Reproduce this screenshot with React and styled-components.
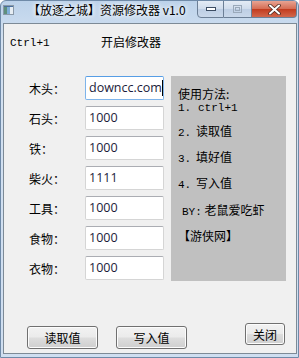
import React from 'react';
import styled, { createGlobalStyle } from 'styled-components';

const Global = createGlobalStyle`
  html, body { margin: 0; padding: 0; background: #fff; }
  #root { width: 299px; height: 358px; }
`;

const cjk = `"Noto Sans CJK SC", "Noto Sans", sans-serif`;

const Win = styled.div`
  width: 299px;
  height: 358px;
  box-sizing: border-box;
  display: flex;
  flex-direction: column;
  background: linear-gradient(#bcd2ea, #d3e1f1 40px, #cfdef0);
  border: 1px solid #6f8aa8;
  border-radius: 6px 6px 0 0;
  overflow: hidden;
`;

const TitleBar = styled.div`
  height: 22px;
  display: flex;
  align-items: flex-start;
  position: relative;
`;

const AppIcon = styled.svg`
  margin: 4px 0 0 2px;
  flex: none;
`;

const Title = styled.div`
  font-family: ${cjk};
  font-size: 12px;
  line-height: 14px;
  color: #000;
  margin: 2px 0 0 14px;
  white-space: nowrap;
  text-shadow: 0 0 6px #fff, 0 0 4px #fff;
`;

const Caption = styled.div`
  display: flex;
  margin-left: auto;
  margin-right: 1px;
  margin-top: -1px;
`;

const CapBtn = styled.div`
  width: ${p => p.$w}px;
  height: 18px;
  box-sizing: border-box;
  border: 1px solid #6c7f96;
  border-left-width: ${p => (p.$first ? 1 : 0)}px;
  border-radius: ${p => p.$r};
  background: ${p => p.$bg};
  display: flex;
  align-items: center;
  justify-content: center;
`;

const Client = styled.div`
  flex: 1;
  margin: 0 1px 3px 2px;
  border: 1px solid #7d8a96;
  background: #f0f0f0;
  display: flex;
  flex-direction: column;
  font-family: ${cjk};
  font-size: 12px;
  color: #000;
`;

const Header = styled.div`
  height: 52px;
  display: flex;
  align-items: flex-start;
  padding-top: 12px;
  box-sizing: border-box;
`;

const Hotkey = styled.span`
  font-family: "Liberation Mono", "DejaVu Sans Mono", monospace;
  font-size: 11px;
  line-height: 14px;
  margin-left: 6px;
  width: 91px;
`;

const HeaderText = styled.span`
  font-size: 12px;
  line-height: 14px;
  margin-top: -1px;
`;

const Main = styled.div`
  display: flex;
  padding-left: 25px;
`;

const Form = styled.div`
  display: grid;
  grid-template-columns: 56px 79px;
  grid-auto-rows: 24px;
  row-gap: 6px;
  align-items: center;
`;

const Label = styled.span`
  font-size: 12px;
  line-height: 14px;
  margin-top: 2px;
`;

const Field = styled.div`
  height: 24px;
  box-sizing: border-box;
  border: 1px solid ${p => (p.$focus ? '#7eb4ea' : '#d5d5d5')};
  border-top-color: ${p => (p.$focus ? '#569de5' : '#abadb3')};
  border-radius: 2px;
  background: #fff;
  font-family: "Open Sans", "Noto Sans", sans-serif;
  font-size: 12.5px;
  line-height: 20px;
  padding-left: 3px;
  color: #1b1b3a;
  display: flex;
  align-items: center;
  white-space: nowrap;
  overflow: hidden;
`;

const Caret = styled.span`
  display: inline-block;
  flex: none;
  width: 1px;
  height: 16px;
  background: #000;
`;

const Panel = styled.div`
  width: 115px;
  height: 205px;
  margin-left: 7px;
  background: #c0c0c0;
  padding: 9px 0 0 7px;
  box-sizing: border-box;
  font-size: 12px;
  line-height: 14px;
`;

const PanelLine = styled.div`
  display: flex;
  align-items: baseline;
  white-space: nowrap;
  margin-top: ${p => p.$mt || 0}px;
  padding-left: ${p => p.$pl || 0}px;
`;

const Num = styled.span`
  font-family: "Liberation Mono", "DejaVu Sans Mono", monospace;
  font-size: 11px;
  width: ${p => p.$w || 18}px;
  flex: none;
`;

const Mono = styled.span`
  font-family: "Liberation Mono", "DejaVu Sans Mono", monospace;
  font-size: 11px;
`;

const Footer = styled.div`
  margin-top: auto;
  display: flex;
  align-items: flex-end;
  padding: 0 11px 4px 23px;
`;

const Btn = styled.button`
  width: ${p => p.$w}px;
  height: ${p => p.$h}px;
  margin-right: ${p => p.$mr || 0}px;
  margin-left: ${p => (p.$auto ? 'auto' : '0')};
  margin-bottom: ${p => p.$mb || 0}px;
  padding: 0;
  box-sizing: border-box;
  border: 1px solid #707070;
  border-radius: 3px;
  background: linear-gradient(#f2f2f2 0%, #ebebeb 48%, #dddddd 52%, #cfcfcf 100%);
  box-shadow: inset 0 0 0 1px #fcfcfc;
  font-family: ${cjk};
  font-size: 12px;
  color: #000;
`;

const fields = [
  ['木头：', 'downcc.com', true],
  ['石头：', '1000'],
  ['铁：', '1000'],
  ['柴火：', '1111'],
  ['工具：', '1000'],
  ['食物：', '1000'],
  ['衣物：', '1000'],
];

export default function App() {
  return (
    <>
      <Global />
      <Win>
        <TitleBar>
          <AppIcon width="11" height="10" viewBox="0 0 11 10">
            <rect x="0.5" y="0.5" width="10" height="9" fill="#e6edf3" stroke="#8a99a8" />
            <rect x="1" y="1" width="3" height="8" fill="#5f8f7d" />
            <rect x="4" y="1" width="3" height="8" fill="#7faed8" />
            <rect x="1" y="1" width="9" height="1" fill="#4a6f9c" />
          </AppIcon>
          <Title>【放逐之城】资源修改器 v1.0</Title>
          <Caption>
            <CapBtn $w={27} $first $r="0 0 0 4px" $bg="linear-gradient(#e3ebf5, #cfdcec 50%, #bdcee4 51%, #c9d8ea)">
              <svg width="10" height="4" viewBox="0 0 10 4">
                <rect x="0.5" y="0.5" width="9" height="3" fill="#fff" stroke="#3c4d63" />
              </svg>
            </CapBtn>
            <CapBtn $w={28} $r="0" $bg="linear-gradient(#e3ebf5, #cfdcec 50%, #bdcee4 51%, #c9d8ea)">
              <svg width="9" height="8" viewBox="0 0 9 8">
                <rect x="0.5" y="0.5" width="8" height="7" fill="none" stroke="#9aa9ba" />
                <rect x="2.5" y="2.5" width="4" height="3" fill="none" stroke="#9aa9ba" />
              </svg>
            </CapBtn>
            <CapBtn $w={45} $r="0 0 4px 0" $bg="linear-gradient(#e8a493, #d56b52 50%, #c23b1e 51%, #d2674c)">
              <svg width="13" height="11" viewBox="0 0 13 11">
                <path d="M2 1.5 L11 9.5 M11 1.5 L2 9.5" stroke="#4a2a22" strokeWidth="3.6" strokeLinecap="round" />
                <path d="M2 1.5 L11 9.5 M11 1.5 L2 9.5" stroke="#fff" strokeWidth="2" strokeLinecap="round" />
              </svg>
            </CapBtn>
          </Caption>
        </TitleBar>
        <Client>
          <Header>
            <Hotkey>Ctrl+1</Hotkey>
            <HeaderText>开启修改器</HeaderText>
          </Header>
          <Main>
            <Form>
              {fields.map(([label, value, focus]) => (
                <React.Fragment key={label}>
                  <Label>{label}</Label>
                  <Field $focus={focus}>
                    {value}
                    {focus && <Caret />}
                  </Field>
                </React.Fragment>
              ))}
            </Form>
            <Panel>
              <PanelLine $mt={2}>使用方法:</PanelLine>
              <PanelLine><Num $w={20}>1.</Num><Mono>ctrl+1</Mono></PanelLine>
              <PanelLine $mt={9}><Num>2.</Num>读取值</PanelLine>
              <PanelLine $mt={10}><Num>3.</Num>填好值</PanelLine>
              <PanelLine $mt={10}><Num>4.</Num>写入值</PanelLine>
              <PanelLine $mt={11} $pl={4}><Mono>BY:</Mono>&nbsp;老鼠爱吃虾</PanelLine>
              <PanelLine $mt={10}>【游侠网】</PanelLine>
            </Panel>
          </Main>
          <Footer>
            <Btn $w={71} $h={23} $mr={18}>读取值</Btn>
            <Btn $w={71} $h={23}>写入值</Btn>
            <Btn $w={40} $h={22} $auto $mb={4}>关闭</Btn>
          </Footer>
        </Client>
      </Win>
    </>
  );
}
